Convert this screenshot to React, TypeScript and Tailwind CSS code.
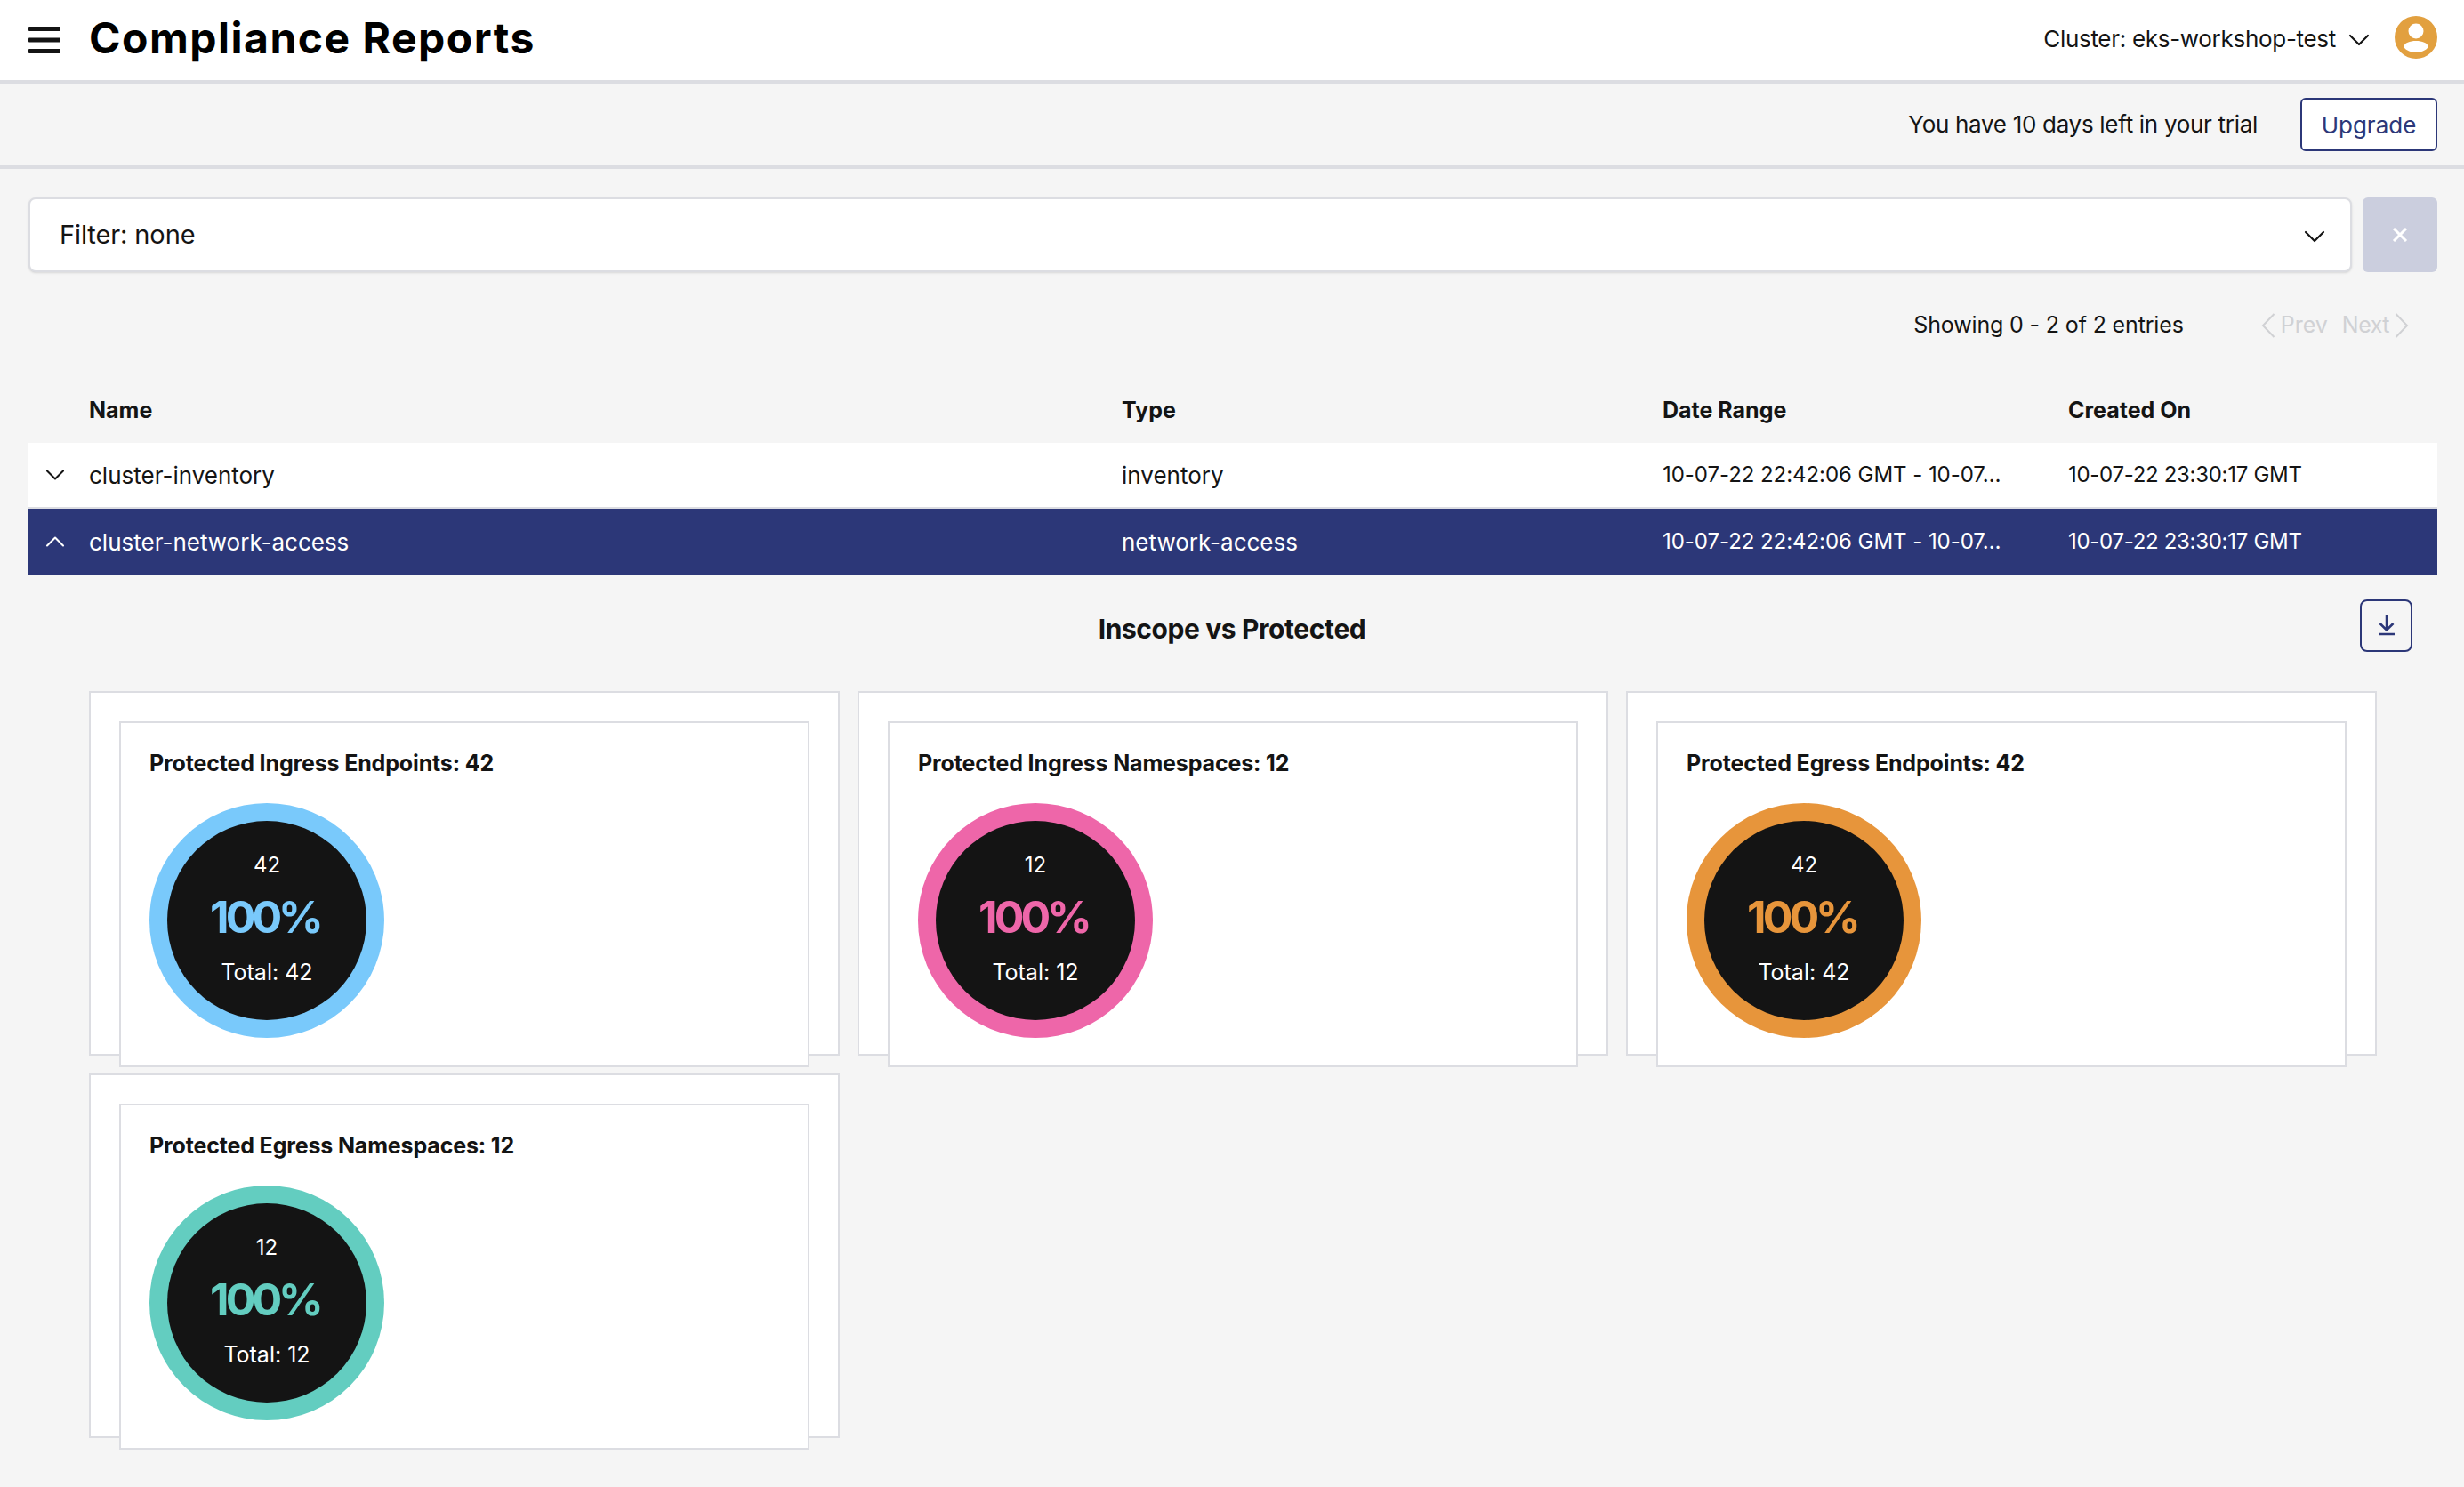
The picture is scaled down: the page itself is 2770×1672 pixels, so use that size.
import { ChevronDown, ChevronUp } from 'lucide-react';

const rows = [
  { name: 'cluster-inventory', type: 'inventory', open: false },
  { name: 'cluster-network-access', type: 'network-access', open: true },
];

const cards = [
  { title: 'Protected Ingress Endpoints: 42', count: '42', total: 'Total: 42', ring: 'bg-[#79c9fb]', text: 'text-[#79c9fb]' },
  { title: 'Protected Ingress Namespaces: 12', count: '12', total: 'Total: 12', ring: 'bg-[#ee66a9]', text: 'text-[#ee66a9]' },
  { title: 'Protected Egress Endpoints: 42', count: '42', total: 'Total: 42', ring: 'bg-[#e7953b]', text: 'text-[#e7953b]' },
  { title: 'Protected Egress Namespaces: 12', count: '12', total: 'Total: 12', ring: 'bg-[#63cdc0]', text: 'text-[#63cdc0]' },
];

function Donut({ count, total, ring, text }: { count: string; total: string; ring: string; text: string }) {
  return (
    <div className={`w-[264px] h-[264px] rounded-full flex items-center justify-center ${ring}`}>
      <div className="w-[224px] h-[224px] rounded-full bg-[#141414] flex flex-col items-center text-white">
        <div className="mt-[36px] h-[28px] leading-[28px] text-[24px]">{count}</div>
        <div className={`mt-[14px] h-[60px] leading-[60px] text-[50px] font-bold tracking-[-4px] pr-[4px] ${text}`}>100%</div>
        <div className="mt-[16px] h-[32px] leading-[32px] text-[25px]">{total}</div>
      </div>
    </div>
  );
}

export default function App() {
  return (
    <div className="min-h-[1672px] bg-[#f5f5f5] text-[#141414] font-['Inter',sans-serif] overflow-hidden">
      {/* Top bar */}
      <header className="h-[94px] bg-white border-b-4 border-[#dcdde2] flex items-center pl-[32px] pr-[30px]">
        <svg width="36" height="30" viewBox="0 0 36 30" className="mr-[32px]">
          <rect x="0" y="0" width="36" height="5" rx="1" fill="#141414" />
          <rect x="0" y="12.5" width="36" height="5" rx="1" fill="#141414" />
          <rect x="0" y="25" width="36" height="5" rx="1" fill="#141414" />
        </svg>
        <h1 className="-mt-[4px] text-[48px] font-bold tracking-[1.5px] text-black">Compliance Reports</h1>
        <div className="ml-auto flex items-center">
          <span className="-mt-[3px] text-[26px] tracking-[-0.3px]">Cluster: eks-workshop-test</span>
          <ChevronDown size={40} strokeWidth={1.3} className="ml-[6px] text-[#141414]" />
          <svg width="48" height="48" viewBox="0 0 48 48" className="ml-[20px] -mt-[6px]">
            <circle cx="24" cy="24" r="24" fill="#e2a03f" />
            <circle cx="24" cy="17" r="8.5" fill="white" />
            <path d="M10 35c1-5 7-7 14-7s13 2 14 7c-3.500 4-8.500 6-14 6s-10.500-2-14-6z" fill="white" />
          </svg>
        </div>
      </header>

      {/* Trial banner */}
      <div className="h-[96px] border-b-4 border-[#dcdde2] flex items-center justify-end pr-[30px]">
        <span className="-mt-[1px] text-[26px] tracking-[-0.3px]">You have 10 days left in your trial</span>
        <button className="ml-[48px] w-[154px] h-[60px] bg-white border-2 border-[#2c3778] rounded-[6px] text-[26px] text-[#2c3778]">
          Upgrade
        </button>
      </div>

      {/* Filter */}
      <div className="mt-[32px] flex items-stretch gap-[12px] pl-[32px] pr-[30px] h-[84px]">
        <div className="flex-1 bg-white border-2 border-[#dcdde2] rounded-[8px] shadow-sm flex items-center justify-between pl-[33px] pr-[20px]">
          <span className="text-[29px] tracking-[-0.1px]">Filter: none</span>
          <ChevronDown size={40} strokeWidth={1.3} className="mt-[4px]" />
        </div>
        <button className="w-[84px] bg-[#cbcede] rounded-[6px] flex items-center justify-center">
          <svg width="18" height="16" viewBox="0 0 18 16" fill="none" stroke="white" strokeWidth="3">
            <path d="M2 1l14 14M16 1L2 15" />
          </svg>
        </button>
      </div>

      {/* Pagination */}
      <div className="mt-[30px] h-[60px] flex items-center justify-end pr-[62px] text-[25px]">
        <span className="tracking-[-0.15px]">Showing 0 - 2 of 2 entries</span>
        <div className="ml-[87px] flex items-center text-[#d0d1d4]">
          <svg width="16" height="28" viewBox="0 0 16 28" fill="none" stroke="currentColor" strokeWidth="2">
            <path d="M14.500 1L2 14l12.500 13" />
          </svg>
          <span className="ml-[6px]">Prev</span>
          <span className="ml-[16px] tracking-[-0.5px]">Next</span>
          <svg width="16" height="28" viewBox="0 0 16 28" fill="none" stroke="currentColor" strokeWidth="2" className="ml-[6px]">
            <path d="M1.500 1L14 14 1.500 27" />
          </svg>
        </div>
      </div>

      {/* Table */}
      <div className="mt-[30px] ml-[32px] mr-[30px]">
        <div className="grid grid-cols-[68px_1161px_608px_456px_1fr] h-[72px] items-center text-[25px] font-bold">
          <span />
          <span>Name</span>
          <span>Type</span>
          <span>Date Range</span>
          <span>Created On</span>
        </div>
        {rows.map((row) => (
          <div
            key={row.name}
            className={`grid grid-cols-[68px_1161px_608px_456px_1fr] items-center text-[26px] ${
              row.open ? 'h-[74px] bg-[#2c3778] text-white' : 'h-[74px] bg-white border-b-2 border-[#dcdde2]'
            }`}
          >
            <span className="flex justify-start pl-[12px]">
              {row.open ? <ChevronUp size={36} strokeWidth={1.4} /> : <ChevronDown size={36} strokeWidth={1.4} />}
            </span>
            <span>{row.name}</span>
            <span>{row.type}</span>
            <span className="text-[24px] tracking-[-0.05px]">10-07-22 22:42:06 GMT - 10-07…</span>
            <span className="text-[24px] tracking-[-0.3px]">10-07-22 23:30:17 GMT</span>
          </div>
        ))}
      </div>

      {/* Section heading */}
      <div className="mt-[28px] px-[58px] h-[59px] grid grid-cols-[1fr_auto_1fr]">
        <span />
        <h2 className="pt-[14px] text-[30px] leading-[38px] font-bold tracking-[-0.4px]">Inscope vs Protected</h2>
        <button className="justify-self-end w-[59px] h-[59px] bg-transparent border-2 border-[#2c3778] rounded-[8px] flex items-center justify-center">
          <svg width="18" height="23" viewBox="0 0 18 23" fill="none" stroke="#2c3778" strokeWidth="2.5">
            <path d="M9 0v16M1.500 9l7.500 7.500L16.500 9" />
            <path d="M0 21h18" />
          </svg>
        </button>
      </div>

      {/* Charts */}
      <div className="mt-[44px] ml-[100px] mr-[98px] grid grid-cols-3 gap-x-[20px] gap-y-[20px] auto-rows-[410px]">
        {cards.map((card) => (
          <div key={card.title} className="h-[410px] bg-white border-2 border-[#dcdde2] pt-[32px] px-[32px]">
            <div className="h-[389px] bg-white border-2 border-[#dcdde2] px-[32px] pt-[31px]">
              <div className="h-[28px] leading-[28px] text-[25px] font-bold tracking-[-0.15px]">{card.title}</div>
              <div className="mt-[31px]">
                <Donut count={card.count} total={card.total} ring={card.ring} text={card.text} />
              </div>
            </div>
          </div>
        ))}
      </div>
    </div>
  );
}
